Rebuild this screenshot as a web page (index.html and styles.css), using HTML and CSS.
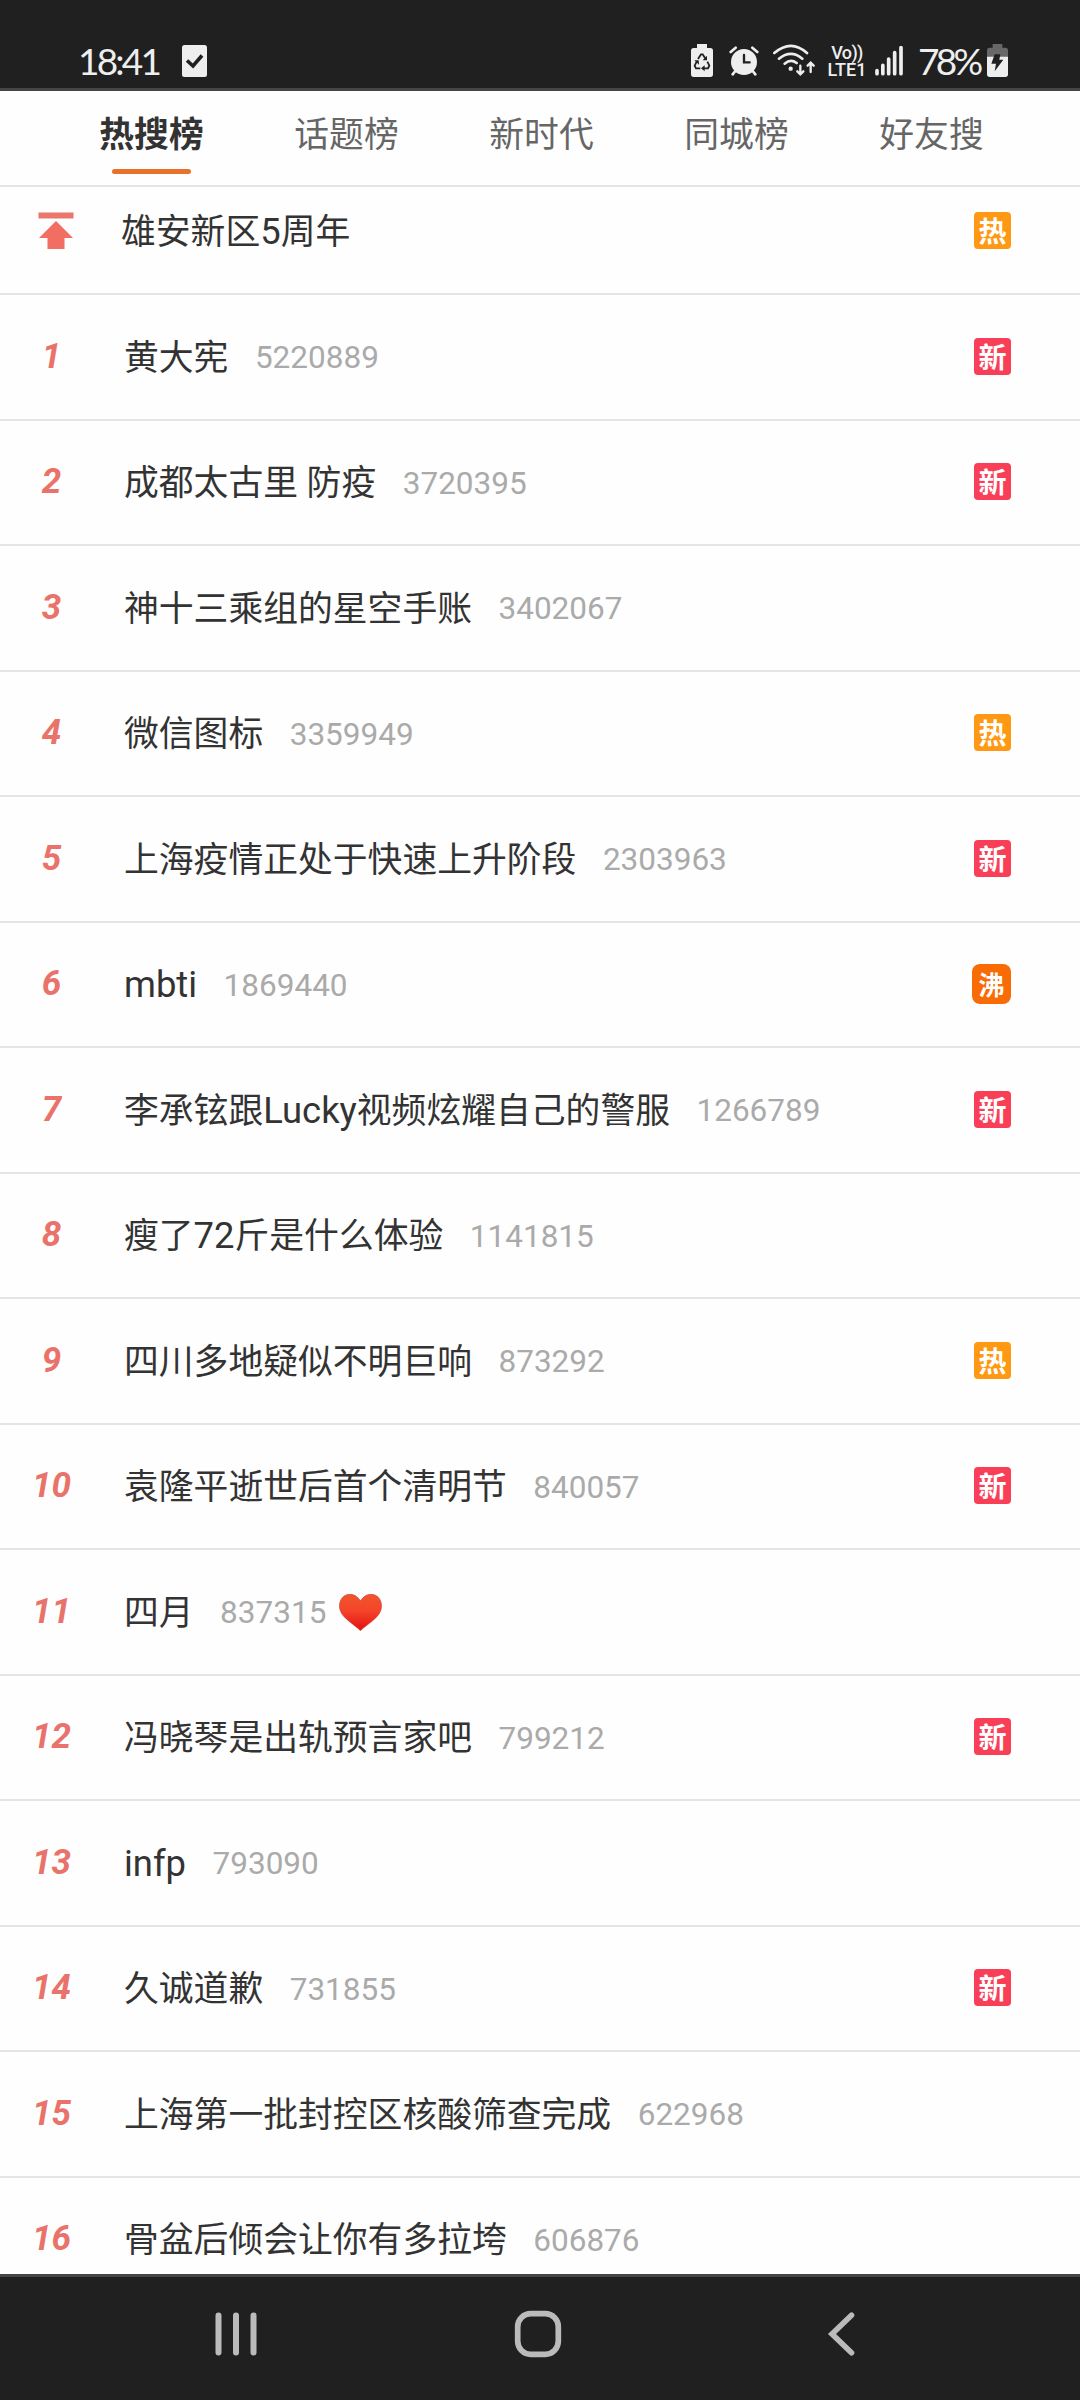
FILE: index.html
```html
<!DOCTYPE html>
<html lang="zh-CN">
<head>
<meta charset="utf-8">
<title>热搜榜</title>
<link rel="stylesheet" href="styles.css">
</head>
<body>
<div class="screen">
  <header class="status">
    <div class="status-left">
      <span class="clock">18:41</span>
      <svg class="task" width="25" height="32" viewBox="0 0 25 32"><rect width="25" height="32" rx="2.5" fill="#eee"/><path d="M5 15.5l6 5.5 9-10.5" fill="none" stroke="#202020" stroke-width="3.6"/></svg>
    </div>
    <div class="status-right">
      <svg width="22" height="33" viewBox="93 72 66 99"><path d="M111 72h30v12h10q8 0 8 8v71q0 8-8 8h-50q-8 0-8-8v-71q0-8 8-8h10z" fill="#eee"/><g fill="none" stroke="#202020" stroke-width="5.500"><path d="M114 117l9-14h5l9 14M142 125l6 12-4 8h-14M121 145h-13l-4-8 6-12"/></g><path d="M141 107v14h-13zM134 136v18l-11-9zM103 121l13 0 1 13z" fill="#202020"/></svg>
      <svg class="i-alarm" width="30" height="30" viewBox="208 77 90 90"><g fill="none" stroke="#eee" stroke-width="8" stroke-linecap="round"><path d="M213 95l15-13M293 95l-15-13M227 152l-8 10M279 152l8 10"/></g><circle cx="253" cy="125" r="39" fill="#eee"/><path d="M253 104v22h17" fill="none" stroke="#202020" stroke-width="7" stroke-linecap="round"/></svg>
      <svg class="i-wifi" width="42" height="32" viewBox="339 73 126 96"><g fill="none" stroke="#eee" stroke-width="8" stroke-linecap="round"><path d="M343 100q50-43 98 0M357 117q36-29 70 0M374 132q18-15 36-2"/><path d="M421 138v26M412 155l9 9 9-9M452 157v-27M443 138l9-9 9 9" stroke-width="7"/></g><circle cx="392" cy="147" r="6.500" fill="#eee"/></svg>
      <div class="volte"><span class="vo">Vo))</span><span>LTE1</span></div>
      <svg class="i-signal" width="28" height="30" viewBox="645 77 84 90"><g stroke="#eee" stroke-width="11" stroke-linecap="round"><path d="M651 151v9M668.500 135v25M686 116v44M704 97v63M723 82v78"/></g></svg>
      <span class="percent">78%</span>
      <svg class="i-batt" width="21" height="33" viewBox="981 72 63 99"><path d="M998 72h29v11h9q8 0 8 8v20h-63v-20q0-8 8-8h9z" fill="#686868"/><path d="M981 110h63v53q0 8-8 8h-47q-8 0-8-8z" fill="#eee"/><path d="M1004 103h17l-3 16h12l-26 35 4-23h-14z" fill="#202020"/></svg>
    </div>
  </header>

  <nav class="tabs">
    <span class="tab active">热搜榜</span>
    <span class="tab">话题榜</span>
    <span class="tab">新时代</span>
    <span class="tab">同城榜</span>
    <span class="tab">好友搜</span>
  </nav>

  <main class="list">
    <div class="row pinned">
      <span class="rank"><svg width="36" height="37" viewBox="0 0 36 37"><path d="M.5.500h35v6h-35z" fill="#e9776c"/><path d="M18 9l17 17h-8.500v11h-17v-11H1z" fill="#f26d62"/></svg></span>
      <span class="title">雄安新区<span class="latin">5</span>周年</span><span class="badge hot">热</span>
    </div>
    <div class="row"><span class="rank">1</span><span class="title">黄大宪</span><span class="count">5220889</span><span class="badge new">新</span></div>
    <div class="row"><span class="rank">2</span><span class="title">成都太古里 防疫</span><span class="count">3720395</span><span class="badge new">新</span></div>
    <div class="row"><span class="rank">3</span><span class="title">神十三乘组的星空手账</span><span class="count">3402067</span></div>
    <div class="row"><span class="rank">4</span><span class="title">微信图标</span><span class="count">3359949</span><span class="badge hot">热</span></div>
    <div class="row"><span class="rank">5</span><span class="title">上海疫情正处于快速上升阶段</span><span class="count">2303963</span><span class="badge new">新</span></div>
    <div class="row"><span class="rank">6</span><span class="title"><span class="latin">mbti</span></span><span class="count">1869440</span><span class="badge boil">沸</span></div>
    <div class="row"><span class="rank">7</span><span class="title">李承铉跟<span class="latin">Lucky</span>视频炫耀自己的警服</span><span class="count">1266789</span><span class="badge new">新</span></div>
    <div class="row"><span class="rank">8</span><span class="title">瘦了<span class="latin">72</span>斤是什么体验</span><span class="count">1141815</span></div>
    <div class="row"><span class="rank">9</span><span class="title">四川多地疑似不明巨响</span><span class="count">873292</span><span class="badge hot">热</span></div>
    <div class="row"><span class="rank">10</span><span class="title">袁隆平逝世后首个清明节</span><span class="count">840057</span><span class="badge new">新</span></div>
    <div class="row"><span class="rank">11</span><span class="title">四月</span><span class="count">837315</span>
      <svg class="heart" width="43" height="37" viewBox="0 0 43 37"><defs><linearGradient id="h" x1="0" y1="0" x2="0" y2="1"><stop offset="0" stop-color="#f2552c"/><stop offset=".45" stop-color="#f4452a"/><stop offset="1" stop-color="#e50f10"/></linearGradient></defs><path d="M21.500 7C18 1.500 14 .3 11 .3 4.500.3.500 5.500.500 12c0 11 12 16 21 24.700C30.500 28 42.500 23 42.500 12 42.500 5.500 38.500.3 32 .3 29 .3 25 1.500 21.500 7z" fill="url(#h)" stroke="#c9372a" stroke-width=".6"/></svg>
    </div>
    <div class="row"><span class="rank">12</span><span class="title">冯晓琴是出轨预言家吧</span><span class="count">799212</span><span class="badge new">新</span></div>
    <div class="row"><span class="rank">13</span><span class="title"><span class="latin">infp</span></span><span class="count">793090</span></div>
    <div class="row"><span class="rank">14</span><span class="title">久诚道歉</span><span class="count">731855</span><span class="badge new">新</span></div>
    <div class="row"><span class="rank">15</span><span class="title">上海第一批封控区核酸筛查完成</span><span class="count">622968</span></div>
    <div class="row"><span class="rank">16</span><span class="title">骨盆后倾会让你有多拉垮</span><span class="count">606876</span></div>
  </main>

  <footer class="navbar">
    <svg width="42" height="44" viewBox="0 0 42 44"><path d="M3.500 3.500v37M21 3.500v37M38.500 3.500v37" stroke="#bbb" stroke-width="6" stroke-linecap="round"/></svg>
    <svg width="48" height="48" viewBox="0 0 48 48"><rect x="3.700" y="3.700" width="40.600" height="40.600" rx="13" fill="none" stroke="#bbb" stroke-width="5.700"/></svg>
    <svg width="28" height="44" viewBox="0 0 28 44"><path d="M24.500 3.300L5 22l19.500 18.700" fill="none" stroke="#bbb" stroke-width="5.600" stroke-linecap="round"/></svg>
  </footer>
</div>
</body>
</html>
```
FILE: styles.css
```css
* { box-sizing: border-box; }
body { margin: 0; }
svg { display: block; flex: none; }

.screen {
  width: 1080px;
  height: 2400px;
  display: flex;
  flex-direction: column;
  overflow: hidden;
  background: #fefefe;
  color: #333;
  font-family: Roboto, "Noto Sans CJK SC", sans-serif;
}

/* status bar */
.status {
  flex: none;
  height: 91px;
  padding: 44px 72px 0 78px;
  display: flex;
  justify-content: space-between;
  align-items: flex-start;
  background: #202020;
  border-bottom: 3px solid #454545;
  color: #eee;
}
.status-left, .status-right { display: flex; align-items: flex-start; }
.clock, .percent { height: 33px; white-space: nowrap; font: 400 37px/33px Lato, sans-serif; }
.clock { width: 104px; letter-spacing: -2.8px; }
.task { margin-top: 1px; }
.i-alarm { margin: 2px 0 0 16px; }
.i-wifi { margin-left: 14px; }
.volte {
  width: 40px;
  margin-left: 12px;
  display: flex;
  flex-direction: column;
  align-items: center;
  font: 500 18px/17px Roboto, sans-serif;
}
.vo { letter-spacing: -.6px; }
.i-signal { margin: 2px 0 0 8px; }
.percent { width: 69px; margin-left: 15px; letter-spacing: -3.7px; }

/* ranking tabs */
.tabs {
  flex: none;
  height: 96px;
  padding: 0 51px 0 54px;
  display: grid;
  grid-template-columns: repeat(5, 195px);
  border-bottom: 2px solid #e4e4e4;
}
.tab {
  display: flex;
  flex-direction: column;
  align-items: center;
  padding-top: 18px;
  font-size: 34.8px;
  line-height: 52px;
  color: #666;
}
.tab.active { color: #333; font-weight: 700; }
.tab.active::after {
  content: "";
  width: 79px;
  height: 5px;
  margin-top: 8px;
  border-radius: 3px;
  background: #e8722a;
}

/* hot search list */
.list { flex: 1; min-height: 0; overflow: hidden; }
.row {
  height: 125.53px;
  padding-right: 69px;
  display: flex;
  align-items: center;
  border-bottom: 2px solid #e4e4e4;
}
.row.pinned { height: 108px; padding-bottom: 19px; }
.rank {
  width: 103px;
  margin-right: 21px;
  display: flex;
  justify-content: center;
  font-size: 35px;
  font-weight: 700;
  font-style: italic;
  line-height: 40px;
  color: #e9736a;
}
.pinned .rank { margin-right: 18px; padding-left: 9px; }
.title { padding-top: 2px; font-size: 34.8px; line-height: 52px; white-space: nowrap; }
.latin { font-size: 36.400px; line-height: 1; }
.count { margin-left: 26.500px; padding-top: 3px; font-size: 31.5px; line-height: 40px; color: #aaa; }
.heart { margin: 2px 0 0 13px; }
.badge {
  width: 37px;
  height: 37px;
  margin: 0 0 1px auto;
  border-radius: 4px;
  color: #fff;
  font: 700 28px/36px "Noto Sans CJK SC", sans-serif;
  text-align: center;
}
.hot { background: #ff9812; }
.new { background: #f93e58; }
.boil { width: 39px; height: 40px; line-height: 39px; border-radius: 8px; background: #f86b05; font-size: 26px; }

/* system navigation */
.navbar {
  flex: none;
  height: 126px;
  padding: 0 88px 9px 85px;
  display: grid;
  grid-template-columns: repeat(3, 1fr);
  place-items: center;
  background: #202020;
  border-top: 3px solid #454545;
}
```
